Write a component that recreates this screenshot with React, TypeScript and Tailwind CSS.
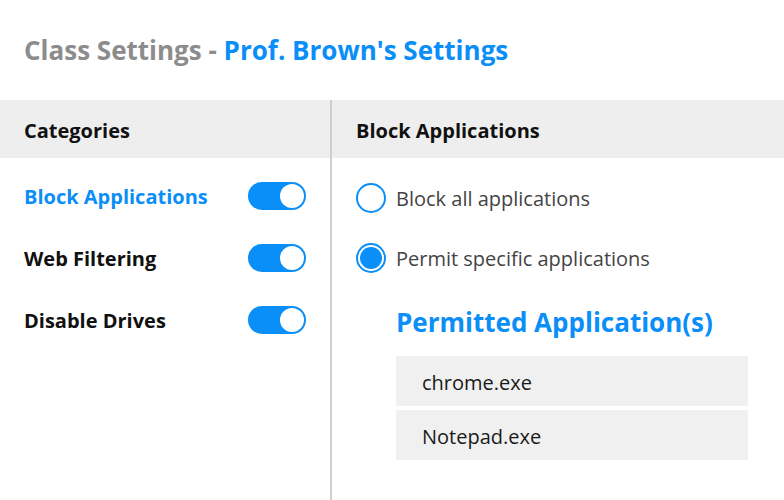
import React from "react";

const categories = [
  { name: "Block Applications", active: true },
  { name: "Web Filtering", active: false },
  { name: "Disable Drives", active: false },
];

const apps = ["chrome.exe", "Notepad.exe"];

function Toggle() {
  return (
    <span className="flex h-[28px] w-[58px] items-center justify-end rounded-full bg-[#0a8ef7] pr-[2px]">
      <span className="h-[24px] w-[24px] rounded-full bg-white" />
    </span>
  );
}

function Radio({ checked }: { checked: boolean }) {
  return (
    <span className="flex h-[30px] w-[30px] shrink-0 items-center justify-center rounded-full border-2 border-[#0a8ef7] bg-white">
      {checked && <span className="h-[22px] w-[22px] rounded-full bg-[#0a8ef7]" />}
    </span>
  );
}

export default function App() {
  return (
    <div className="h-[500px] w-[784px] overflow-hidden bg-white font-['Open_Sans',sans-serif]">
      {/* Title */}
      <div className="flex h-[100px] items-center px-6">
        <h1 className="text-[26px] font-bold">
          <span className="text-[#8c8c8c]">Class Settings - </span>
          <span className="text-[#0a8ef7]">Prof. Brown's Settings</span>
        </h1>
      </div>

      <div className="flex h-[400px]">
        {/* Categories */}
        <div className="w-[332px] shrink-0 border-r-2 border-[#cfcfcf]">
          <div className="flex h-[58px] items-center bg-[#eeeeee] px-6 pt-[4px] text-[20px] font-bold text-[#111]">
            Categories
          </div>
          <div className="flex flex-col gap-[34px] pl-6 pr-6 pt-[24px]">
            {categories.map((c) => (
              <div key={c.name} className="flex h-[28px] items-center justify-between">
                <span
                  className={
                    c.active
                      ? "mt-[2px] text-[20px] font-bold text-[#0a8ef7]"
                      : "mt-[2px] text-[20px] font-bold text-[#111]"
                  }
                >
                  {c.name}
                </span>
                <Toggle />
              </div>
            ))}
          </div>
        </div>

        {/* Block Applications */}
        <div className="flex-1">
          <div className="flex h-[58px] items-center bg-[#eeeeee] px-6 pt-[4px] text-[20px] font-bold text-[#111]">
            Block Applications
          </div>
          <div className="flex flex-col gap-[30px] pl-6 pt-[25px]">
            <label className="flex h-[30px] items-center gap-[10px] text-[20px] text-[#444]">
              <Radio checked={false} />
              <span className="mt-[2px]">Block all applications</span>
            </label>
            <label className="flex h-[30px] items-center gap-[10px] text-[20px] text-[#444]">
              <Radio checked={true} />
              <span className="mt-[2px]">Permit specific applications</span>
            </label>
          </div>
          <div className="pl-[64px] pr-[36px] pt-[30px]">
            <h2 className="text-[26px] font-bold text-[#0a8ef7]">Permitted Application(s)</h2>
            <div className="mt-[14px] flex flex-col gap-[4px]">
              {apps.map((a) => (
                <div key={a} className="flex h-[50px] items-center bg-[#f0f0f0] px-[26px] pt-[4px] text-[20px] text-[#1a1a1a]">
                  {a}
                </div>
              ))}
            </div>
          </div>
        </div>
      </div>
    </div>
  );
}
